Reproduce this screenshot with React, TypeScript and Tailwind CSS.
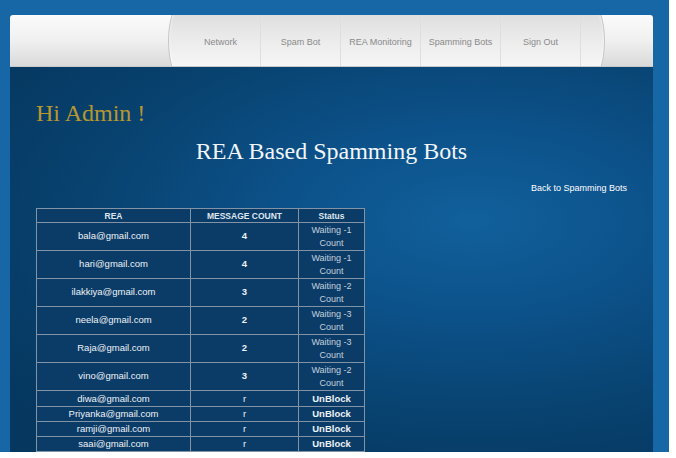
export default function App() {
  const nav = ["Network", "Spam Bot", "REA Monitoring", "Spamming Bots", "Sign Out"];
  const waiting = [
    { rea: "bala@gmail.com", count: "4", s: "Waiting -1" },
    { rea: "hari@gmail.com", count: "4", s: "Waiting -1" },
    { rea: "ilakkiya@gmail.com", count: "3", s: "Waiting -2" },
    { rea: "neela@gmail.com", count: "2", s: "Waiting -3" },
    { rea: "Raja@gmail.com", count: "2", s: "Waiting -3" },
    { rea: "vino@gmail.com", count: "3", s: "Waiting -2" },
  ];
  const blocked = ["diwa@gmail.com", "Priyanka@gmail.com", "ramji@gmail.com", "saai@gmail.com"];
  const td = "border border-[#8393a6] text-center p-0";
  return (
    <div className="w-[676px] h-[458px] bg-white font-['Liberation_Sans',Arial,sans-serif]">
      <div className="w-[669px] h-[452px] bg-[#1767a7] pl-[10px] pr-[16px] pt-[15px] flex flex-col">
        <header className="h-[52px] shrink-0 rounded-t-[3px] overflow-hidden flex items-center bg-gradient-to-b from-[#fbfbfb] via-[#f0f0f0] to-[#dadada] border-b border-[#c9c9c9]">
          <div className="w-[158px] shrink-0" />
          <nav className="h-[78px] w-[437px] shrink-0 rounded-[14px/39px] border border-[#c6c6c6] bg-gradient-to-b from-[#d8d8d8] via-[#ececec] to-[#fbfbfb] shadow-[inset_0_0_3px_rgba(255,255,255,0.9)] flex pl-[12px]">
            {nav.map((n) => (
              <div
                key={n}
                className="w-[80px] flex items-center justify-center pt-[4px] border-r border-[#dedede] text-[9px] text-[#8a8a8a]"
              >
                {n}
              </div>
            ))}
          </nav>
        </header>
        <main className="flex-1 overflow-hidden bg-[radial-gradient(ellipse_at_72%_40%,#11609c_0%,#0c5189_30%,#08426f_60%,#05375f_90%)]">
          <h1 className="pl-[26px] pt-[34px] font-['Liberation_Serif',serif] text-[24px] leading-[24px] text-[#b8972f]">
            Hi Admin !
          </h1>
          <h2 className="mt-[14px] text-center font-['Liberation_Serif',serif] text-[24px] leading-[24px] text-[#f2f6fa]">
            REA Based Spamming Bots
          </h2>
          <div className="mt-[19px] pr-[26px] text-right text-[9px] leading-[12px] text-white">
            Back to Spamming Bots
          </div>
          <table className="ml-[26px] mt-[14px] border-collapse table-fixed w-[328px] bg-[#0b3c68] text-[9.5px] text-[#eef2f6]">
            <colgroup>
              <col className="w-[154px]" />
              <col className="w-[108px]" />
              <col className="w-[66px]" />
            </colgroup>
            <thead>
              <tr className="h-[14px]">
                <th className={td + " text-[8.5px] leading-[12px] font-bold text-[#dfe6ee]"}>REA</th>
                <th className={td + " text-[8.5px] leading-[12px] font-bold text-[#dfe6ee]"}>MESSAGE COUNT</th>
                <th className={td + " text-[8.5px] leading-[12px] font-bold text-[#dfe6ee]"}>Status</th>
              </tr>
            </thead>
            <tbody>
              {waiting.map((r) => (
                <tr key={r.rea} className="h-[28px]">
                  <td className={td}>{r.rea}</td>
                  <td className={td + " font-bold"}>{r.count}</td>
                  <td className={td + " text-[9px] leading-[12.5px] text-[#c4d0dc]"}>
                    {r.s}
                    <br />
                    Count
                  </td>
                </tr>
              ))}
              {blocked.map((b, i) => (
                <tr key={b} className={i === 0 ? "h-[16px]" : "h-[15px]"}>
                  <td className={td + " leading-[12px]"}>{b}</td>
                  <td className={td + " leading-[12px]"}>r</td>
                  <td className={td + " leading-[12px] font-bold"}>UnBlock</td>
                </tr>
              ))}
            </tbody>
          </table>
        </main>
      </div>
    </div>
  );
}
